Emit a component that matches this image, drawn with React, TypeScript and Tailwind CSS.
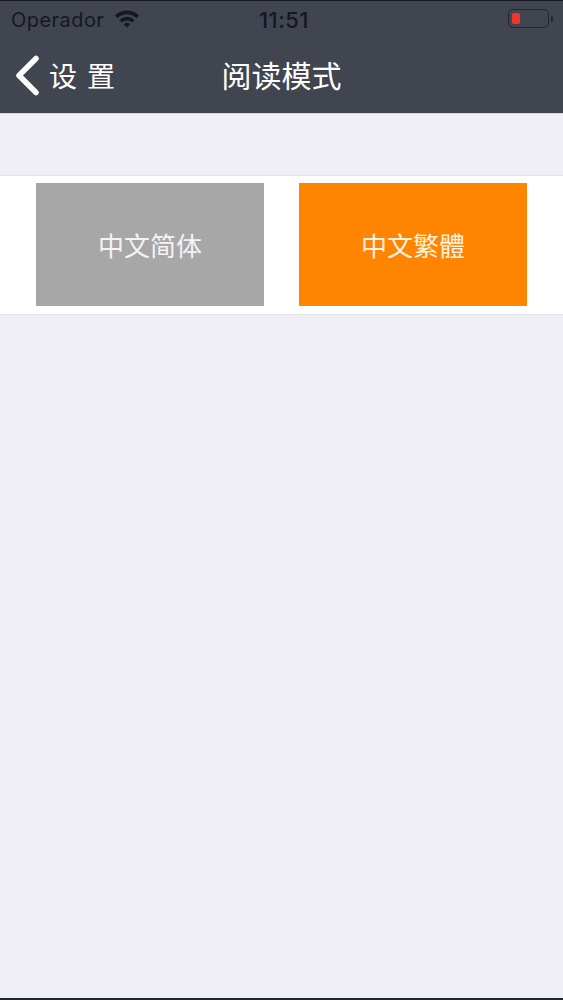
import React from 'react';

const cjk = { fontFamily: '"Noto Sans CJK SC", "Liberation Sans", sans-serif' };

function Wifi() {
  return (
    <svg width="26" height="19" viewBox="0 0 26 19" className="ml-[10px] -mt-[3px]">
      <path d="M1 6.5 A17 17 0 0 1 25 6.5 L22.4 9.2 A13.4 13.4 0 0 0 3.6 9.2 Z" fill="#15181f" />
      <path d="M5.4 10.9 A11 11 0 0 1 20.6 10.9 L18 13.5 A7.4 7.4 0 0 0 8 13.5 Z" fill="#15181f" />
      <path d="M9.8 15.2 A5 5 0 0 1 16.2 15.2 L13 18.4 Z" fill="#15181f" />
    </svg>
  );
}

function Battery() {
  return (
    <div className="flex items-center">
      <div className="w-[41px] h-[19px] rounded-[5px] border border-[#22262d] p-[3px]">
        <div className="w-[8px] h-full rounded-[2px] bg-[#f5352b]" />
      </div>
      <div className="w-[2px] h-[6px] ml-[2px] rounded-r-sm bg-[#22262d]" />
    </div>
  );
}

export default function App() {
  return (
    <div className="w-[563px] h-[1000px] flex flex-col overflow-hidden bg-[#f0eef5]">
      <div className="h-[114px] shrink-0 bg-[#40454f] border-t border-[#15181f] border-b-[#d3d3d8] border-b">
        <div className="h-[38px] relative flex items-center pl-[11px] text-[#15181f] text-[20px] tracking-[0.45px]" style={{ fontFamily: '"Inter", "Liberation Sans", sans-serif' }}>
          <span className="font-normal">Operador</span>
          <Wifi />
          <span className="absolute left-[259px] top-[5px] text-[22px] leading-[28px] font-medium">11:51</span>
          <div className="absolute left-[508px] top-[8px]">
            <Battery />
          </div>
        </div>
        <div className="relative h-[74px] flex items-center justify-center pb-[4px]">
          <div className="absolute left-[14px] top-0 h-full flex items-center pb-[2px]">
            <svg width="26" height="42" viewBox="0 0 26 42" className="mt-[1px]">
              <path d="M22 3.5 L5 20.5 L22 37.5" fill="none" stroke="#fff" strokeWidth="5.5" strokeLinecap="round" strokeLinejoin="round" />
            </svg>
            <span className="ml-[9px] text-[28px] text-white tracking-[10px] leading-none" style={cjk}>设置</span>
          </div>
          <span className="text-[30px] text-white leading-none font-normal" style={cjk}>阅读模式</span>
        </div>
      </div>
      <div className="mt-[61px] h-[140px] shrink-0 bg-white border-y border-[#e4e3e8] flex justify-between pl-[36px] pr-[36px] pt-[7px]">
        <button className="w-[228px] h-[123px] bg-[#a8a7a7] text-[#f3f3f3] text-[26px]" style={cjk}>中文简体</button>
        <button className="w-[228px] h-[123px] bg-[#ff8400] text-[#fff3e0] text-[26px]" style={cjk}>中文繁體</button>
      </div>
      <div className="flex-1" />
      <div className="h-[2px] shrink-0 bg-[#22252b]" />
    </div>
  );
}
